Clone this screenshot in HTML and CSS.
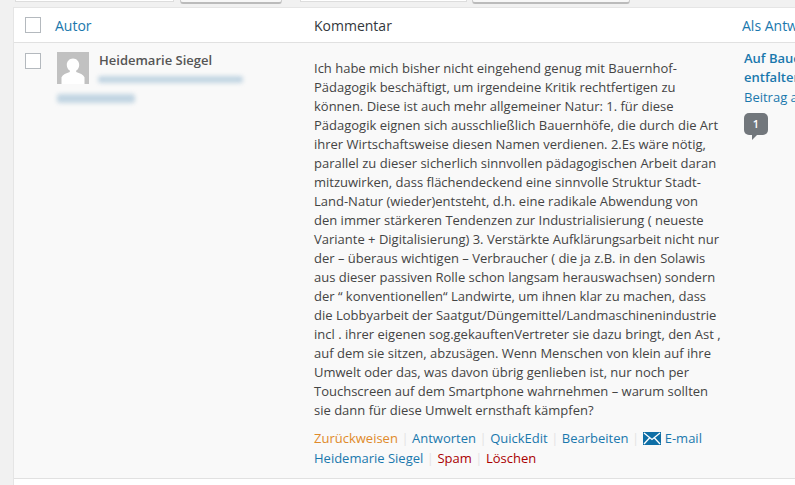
FILE: index.html
```html
<!DOCTYPE html>
<html lang="de">
<head>
<meta charset="utf-8">
<title>Kommentare</title>
<link rel="stylesheet" href="styles.css">
</head>
<body>
<div class="toolbar">
  <div class="tb-input tb-i1"></div>
  <div class="tb-btn tb-b1"></div>
  <div class="tb-input tb-i2"></div>
  <div class="tb-btn tb-b2"></div>
</div>
<div class="table">
  <div class="head">
    <div class="c-check"><span class="box"></span></div>
    <div class="c-author"><a class="th-link">Autor</a></div>
    <div class="c-comment th-text">Kommentar</div>
    <div class="c-resp"><a class="th-link">Als Antwort auf</a></div>
  </div>
  <div class="row">
    <div class="c-check"><span class="box"></span></div>
    <div class="c-author author-cell">
      <div class="author-top">
        <svg class="avatar" viewBox="0 0 32 32" width="32" height="32"><rect width="32" height="32" fill="#c1c1c1"/><path d="M16 6.500c3.600 0 6.200 2.900 6.200 6.400 0 2.500-1.200 4.500-3 5.700v1.500c3.500 1 7.200 2.900 8.300 5.200V32H4.500v-6.700c1.100-2.300 4.800-4.200 8.300-5.200v-1.500c-1.800-1.200-3-3.200-3-5.700 0-3.500 2.600-6.400 6.200-6.400z" fill="#fff"/></svg>
        <div class="author-text">
          <strong class="name">Heidemarie Siegel</strong>
          <div class="blur blur-mail"></div>
        </div>
      </div>
      <div class="blur blur-ip"></div>
    </div>
    <div class="c-comment">
      <p class="text">Ich habe mich bisher nicht eingehend genug mit Bauernhof-<br>Pädagogik beschäftigt, um irgendeine Kritik rechtfertigen zu<br>können. Diese ist auch mehr allgemeiner Natur: 1. für diese<br>Pädagogik eignen sich ausschließlich Bauernhöfe, die durch die Art<br>ihrer Wirtschaftsweise diesen Namen verdienen. 2.Es wäre nötig,<br>parallel zu dieser sicherlich sinnvollen pädagogischen Arbeit daran<br>mitzuwirken, dass flächendeckend eine sinnvolle Struktur Stadt-<br>Land-Natur (wieder)entsteht, d.h. eine radikale Abwendung von<br>den immer stärkeren Tendenzen zur Industrialisierung ( neueste<br>Variante + Digitalisierung) 3. Verstärkte Aufklärungsarbeit nicht nur<br>der – überaus wichtigen – Verbraucher ( die ja z.B. in den Solawis<br>aus dieser passiven Rolle schon langsam herauswachsen) sondern<br>der “ konventionellen“ Landwirte, um ihnen klar zu machen, dass<br>die Lobbyarbeit der Saatgut/Düngemittel/Landmaschinenindustrie<br>incl . ihrer eigenen sog.gekauftenVertreter sie dazu bringt, den Ast ,<br>auf dem sie sitzen, abzusägen. Wenn Menschen von klein auf ihre<br>Umwelt oder das, was davon übrig genlieben ist, nur noch per<br>Touchscreen auf dem Smartphone wahrnehmen – warum sollten<br>sie dann für diese Umwelt ernsthaft kämpfen?</p>
      <div class="actions">
        <a class="orange">Zurückweisen</a><span class="sep">|</span><a>Antworten</a><span class="sep">|</span><a>QuickEdit</a><span class="sep">|</span><a>Bearbeiten</a><span class="sep">|</span><svg class="mail" viewBox="0 0 18 13" width="18" height="13"><rect width="18" height="13" fill="#0f6fa6"/><path d="M1 1l8 6.500L17 1M1 12l5.500-6M17 12l-5.500-6" fill="none" stroke="#fff" stroke-width="1.300"/></svg><a>E-mail</a><br>
        <a>Heidemarie Siegel</a><span class="sep">|</span><a class="red">Spam</a><span class="sep">|</span><a class="red">Löschen</a>
      </div>
    </div>
    <div class="c-resp resp-cell">
      <a class="post">Auf Bauernhöfen<br>entfalten</a>
      <a class="view">Beitrag ansehen</a>
      <span class="bubble">1</span>
    </div>
  </div>
</div>
</body>
</html>
```

FILE: styles.css
```css
html, body {
  margin: 0;
  padding: 0;
  width: 795px;
  height: 485px;
  overflow: hidden;
  background: #f1f1f1;
  font-family: "Open Sans", sans-serif;
  font-size: 13px;
  color: #444;
}
a { color: #1a78ad; }
.toolbar {
  height: 7px;
  display: flex;
  overflow: hidden;
  background: #f1f1f1;
}
.tb-input {
  height: 1px;
  background: #fff;
  border: 1px solid #ddd;
  border-top: 0;
}
.tb-btn {
  height: 2px;
  background: #f7f7f7;
  border: 1px solid #ccc;
  border-top: 0;
  border-bottom: 2px solid #bbb;
  border-radius: 0 0 3px 3px;
}
.tb-i1 { width: 157px; margin-left: 15px; }
.tb-b1 { width: 100px; margin-left: 6px; }
.tb-i2 { width: 165px; margin-left: 18px; }
.tb-b2 { width: 156px; margin-left: 5px; }
.table {
  margin-left: 13px;
  width: 782px;
  height: 478px;
  background: #fff;
  border-left: 1px solid #e5e5e5;
  border-top: 1px solid #e5e5e5;
  box-sizing: border-box;
}
.head, .row { display: flex; }
.head {
  height: 34px;
  align-items: center;
  border-bottom: 1px solid #e1e1e1;
  font-size: 14px;
}
.row {
  height: 435px;
  background: #f9f9f9;
  border-bottom: 1px solid #e1e1e1;
}
.c-check { width: 41px; flex: none; padding-left: 11px; box-sizing: border-box; }
.c-author { width: 259px; flex: none; }
.c-comment { width: 428px; flex: none; }
.c-resp { flex: 1; white-space: nowrap; overflow: hidden; }
.box {
  display: block;
  width: 14px;
  height: 14px;
  background: #fff;
  border: 1px solid #b4b9be;
}
.row .c-check { padding-top: 10px; }
.th-text { color: #32373c; }
.author-cell { padding: 9px 0 0 2px; box-sizing: border-box; }
.author-top { display: flex; }
.avatar { display: block; flex: none; }
.author-text { margin-left: 10px; }
.name { display: block; font-size: 13px; line-height: 19px; font-weight: 600; color: #555; margin-top: -1px; }
.blur { background: #c2d5e2; filter: blur(2px); border-radius: 3px; }
.blur-mail { width: 145px; height: 7px; margin: 6px 0 0 -1px; }
.blur-ip { width: 78px; height: 9px; margin-top: 10px; }
.c-comment .text {
  margin: 0;
  padding-top: 16px;
  line-height: 19px;
  font-size: 13px;
  white-space: nowrap;
  color: #444;
}
.actions { margin-top: 8px; line-height: 20px; white-space: nowrap; }
.sep { color: #e4e4e4; margin: 0 3.500px; }
.orange { color: #e08a2a; }
.red { color: #a00; }
.mail { margin: 0 4px 0 0; vertical-align: -2px; }
.resp-cell { padding: 6px 0 0 2px; box-sizing: border-box; }
.post { display: block; font-weight: 600; line-height: 19px; }
.view { display: block; line-height: 19px; margin-top: 1px; }
.bubble {
  position: relative;
  display: block;
  width: 24px;
  height: 22px;
  margin-top: 6px;
  background: #72777c;
  border-radius: 5px;
  color: #fff;
  font-size: 11px;
  font-weight: 600;
  line-height: 22px;
  text-align: center;
}
.bubble::after {
  content: "";
  position: absolute;
  left: 8px;
  top: 100%;
  border-top: 5px solid #72777c;
  border-right: 5px solid transparent;
}
```
